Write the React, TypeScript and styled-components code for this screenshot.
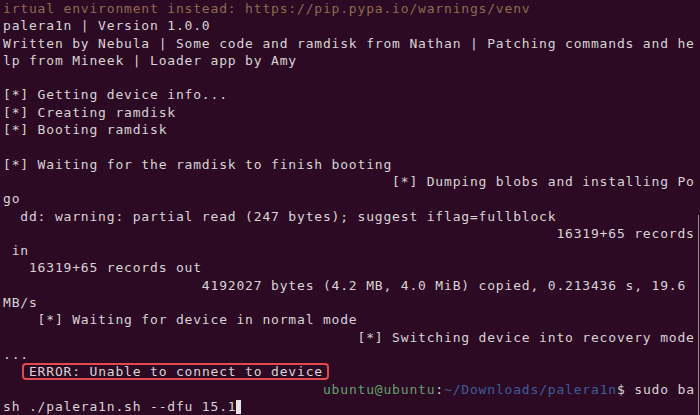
import React from "react";
import styled, { createGlobalStyle } from "styled-components";

const Global = createGlobalStyle`
  html, body { margin: 0; padding: 0; background: #2c0a23; }
  body { width: 700px; height: 415px; overflow: hidden; }
`;

const Screen = styled.div`
  position: relative;
  width: 700px;
  height: 415px;
  box-sizing: border-box;
  padding: 0 0 0 3px;
  background: #2c0a23;
  overflow: hidden;
`;

const Terminal = styled.div`
  display: flex;
  flex-direction: column;
  font-family: "DejaVu Sans Mono", "Liberation Mono", monospace;
  font-size: 13px;
  letter-spacing: 0.82px;
  line-height: 17.3px;
  color: #d9d3d6;
  white-space: pre;
`;

const Line = styled.div`
  height: 17.3px;
`;

const Tone = styled.span<{ $c: string }>`
  color: ${(p) => p.$c};
`;

const Boxed = styled.span`
  position: relative;
  &::after {
    content: "";
    position: absolute;
    top: -1px;
    bottom: -1px;
    left: -7px;
    right: -6px;
    border: 2px solid #e04a4c;
    border-radius: 4px;
  }
`;

const Cursor = styled.span`
  display: inline-block;
  width: 5px;
  height: 14px;
  vertical-align: -3px;
  background: #e8e4e6;
`;

const ScrollEdge = styled.div`
  position: absolute;
  right: 1px;
  top: 215px;
  width: 1px;
  height: 200px;
  background: #9d8a96;
`;

const lines: string[] = [
  "palera1n | Version 1.0.0",
  "Written by Nebula | Some code and ramdisk from Nathan | Patching commands and he",
  "lp from Mineek | Loader app by Amy",
  "",
  "[*] Getting device info...",
  "[*] Creating ramdisk",
  "[*] Booting ramdisk",
  "",
  "[*] Waiting for the ramdisk to finish booting",
  "                                             [*] Dumping blobs and installing Po",
  "go",
  "  dd: warning: partial read (247 bytes); suggest iflag=fullblock",
  "                                                                16319+65 records",
  " in",
  "   16319+65 records out",
  "                       4192027 bytes (4.2 MB, 4.0 MiB) copied, 0.213436 s, 19.6",
  "MB/s",
  "    [*] Waiting for device in normal mode",
  "                                         [*] Switching device into recovery mode",
  "...",
];

export default function App() {
  return (
    <Screen>
      <Global />
      <Terminal>
        <Line>
          <Tone $c="#8f6a52">irtual environment instead: https://pip.pypa.io/warnings/venv</Tone>
        </Line>
        {lines.map((l, i) => (
          <Line key={i}>{l}</Line>
        ))}
        <Line>
          {"   "}
          <Boxed>ERROR: Unable to connect to device</Boxed>
        </Line>
        <Line>
          {"                                     "}
          <Tone $c="#62a06e">ubuntu@ubuntu</Tone>
          :<Tone $c="#3c5d9c">~/Downloads/palera1n</Tone>$ sudo ba
        </Line>
        <Line>
          sh ./palera1n.sh --dfu 15.1
          <Cursor />
        </Line>
      </Terminal>
      <ScrollEdge />
    </Screen>
  );
}
